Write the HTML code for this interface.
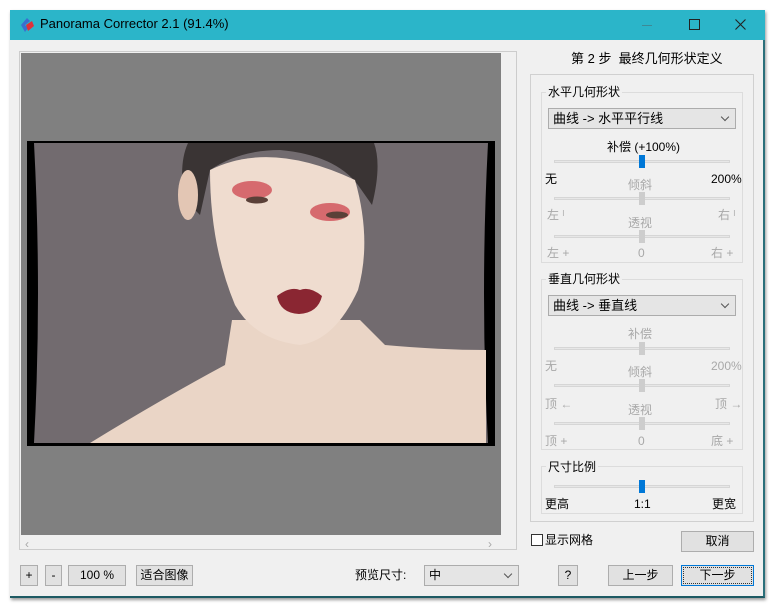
<!DOCTYPE html>
<html><head><meta charset="utf-8"><style>
*{box-sizing:border-box;margin:0;padding:0}
body{width:777px;height:608px;background:#fff;position:relative;overflow:hidden;font-family:"Liberation Sans","Noto Sans CJK SC",sans-serif;font-size:12px;color:#000}
.a{position:absolute}
.btn{position:absolute;background:#e1e1e1;border:1px solid #adadad;text-align:center;line-height:18px;font-size:12px}
.gb{position:absolute;border:1px solid #dcdcdc}
.gt{position:absolute;background:#f0f0f0;padding:0 2px;font-size:12px;line-height:14px}
.dd{position:absolute;background:#e5e5e5;border:1px solid #acacac;height:21px;line-height:19px;padding-left:4px;font-size:13px}
.dd:after{content:"";position:absolute;right:7px;top:5px;width:5px;height:5px;border-right:1px solid #555;border-bottom:1px solid #555;transform:rotate(45deg)}
.tr{position:absolute;height:3px;background:#e7e7e7;border:1px solid #d6d6d6}
.th{position:absolute;width:6px;height:13px;background:#cdcdcd}
.th.b{background:#0078d7}
.g{color:#a8a8a8}
.t{position:absolute;font-size:12px;line-height:14px;white-space:nowrap}
</style></head><body>
<div class="a" style="left:10px;top:10px;width:755px;height:588px;background:#f0f0f0;border-right:2px solid #2a6f7a;border-bottom:2px solid #1e5a63;box-shadow:1px 2px 3px rgba(0,0,0,.4)"></div>
<div class="a" style="left:10px;top:10px;width:755px;height:30px;background:#2bb5c9"></div>
<svg class="a" style="left:18px;top:16px" width="18" height="18" viewBox="0 0 18 18"><path d="M3 9 L9 2 L12 5 L7 9 L10 12 L7 16 Z" fill="#3a6fd0"/><path d="M8 9 L14 5 L16 10 L10 15 Z" fill="#e0313a"/></svg>
<div class="t" style="left:40px;top:17px;font-size:13px">Panorama Corrector 2.1 (91.4%)</div>
<div class="a" style="left:642px;top:25px;width:10px;height:1px;background:#3d8a96"></div>
<div class="a" style="left:689px;top:19px;width:11px;height:11px;border:1px solid #222"></div>
<svg class="a" style="left:735px;top:19px" width="11" height="11"><path d="M0.5 0.5 L10.5 10.5 M10.5 0.5 L0.5 10.5" stroke="#222" stroke-width="1.1"/></svg>

<div class="a" style="left:19px;top:51px;width:498px;height:499px;border:1px solid #ccc;background:#f0f0f0"></div>
<div class="a" style="left:21px;top:53px;width:480px;height:482px;background:#808080"></div>
<svg class="a" style="left:0;top:0" width="777" height="608">
<rect x="27" y="141" width="468" height="305" fill="#000"/>
<path d="M34 143 Q42 294 34 443 L488 443 Q480 294 488 143 Z" fill="#726b6f"/>
<path d="M90 443 Q160 400 225 365 L232 320 L360 320 L385 345 Q440 350 486 350 L486 443 Z" fill="#ead5c6"/>
<path d="M188 143 Q178 165 185 200 L200 215 L210 170 Q240 150 280 150 Q335 155 358 185 L372 205 Q382 165 374 143 Z" fill="#3a3434"/>
<ellipse cx="188" cy="195" rx="10" ry="25" fill="#e3c6b4"/>
<path d="M210 170 Q270 140 355 180 Q372 240 358 290 Q335 340 300 345 Q255 340 235 305 Q210 245 210 170 Z" fill="#efdccf"/>
<ellipse cx="252" cy="190" rx="20" ry="9" fill="#d66a6e"/>
<ellipse cx="330" cy="212" rx="20" ry="9" fill="#d66a6e"/>
<ellipse cx="257" cy="200" rx="11" ry="3.5" fill="#5a4038"/>
<ellipse cx="337" cy="215" rx="11" ry="3.5" fill="#5a4038"/>
<path d="M277 296 Q290 286 300 290 Q310 286 322 296 Q318 313 299 314 Q280 313 277 296 Z" fill="#8a2632"/>
</svg>
<div class="a" style="left:501px;top:53px;width:15px;height:482px;background:#f0f0f0"></div>
<div class="t g" style="left:25px;top:537px">‹</div>
<div class="t g" style="left:488px;top:537px">›</div>

<div class="t" style="left:571px;top:52px;font-size:13px">第 2 步&nbsp; 最终几何形状定义</div>
<div class="a" style="left:530px;top:74px;width:224px;height:448px;border:1px solid #d0d0d0"></div>

<div class="gb" style="left:541px;top:92px;width:202px;height:171px"></div>
<div class="gt" style="left:546px;top:85px">水平几何形状</div>
<div class="dd" style="left:548px;top:108px;width:188px">曲线 -&gt; 水平平行线</div>
<div class="t" style="left:607px;top:140px">补偿 (+100%)</div>
<div class="tr" style="left:554px;top:160px;width:176px"></div><div class="th b" style="left:639px;top:155px"></div>
<div class="t" style="left:545px;top:172px">无</div><div class="t" style="left:711px;top:172px">200%</div>
<div class="t g" style="left:628px;top:178px">倾斜</div>
<div class="tr" style="left:554px;top:197px;width:176px"></div><div class="th" style="left:639px;top:192px"></div>
<div class="t g" style="left:547px;top:208px">左 ˡ</div><div class="t g" style="left:718px;top:208px">右 ˡ</div>
<div class="t g" style="left:628px;top:216px">透视</div>
<div class="tr" style="left:554px;top:235px;width:176px"></div><div class="th" style="left:639px;top:230px"></div>
<div class="t g" style="left:547px;top:246px">左 +</div><div class="t g" style="left:638px;top:246px">0</div><div class="t g" style="left:711px;top:246px">右 +</div>

<div class="gb" style="left:541px;top:279px;width:202px;height:171px"></div>
<div class="gt" style="left:546px;top:272px">垂直几何形状</div>
<div class="dd" style="left:548px;top:295px;width:188px">曲线 -&gt; 垂直线</div>
<div class="t g" style="left:628px;top:327px">补偿</div>
<div class="tr" style="left:554px;top:347px;width:176px"></div><div class="th" style="left:639px;top:342px"></div>
<div class="t g" style="left:545px;top:359px">无</div><div class="t g" style="left:711px;top:359px">200%</div>
<div class="t g" style="left:628px;top:365px">倾斜</div>
<div class="tr" style="left:554px;top:384px;width:176px"></div><div class="th" style="left:639px;top:379px"></div>
<div class="t g" style="left:545px;top:397px">顶 ←</div><div class="t g" style="left:715px;top:397px">顶 →</div>
<div class="t g" style="left:628px;top:403px">透视</div>
<div class="tr" style="left:554px;top:422px;width:176px"></div><div class="th" style="left:639px;top:417px"></div>
<div class="t g" style="left:545px;top:434px">顶 +</div><div class="t g" style="left:638px;top:434px">0</div><div class="t g" style="left:711px;top:434px">底 +</div>

<div class="gb" style="left:541px;top:466px;width:202px;height:48px"></div>
<div class="gt" style="left:546px;top:460px">尺寸比例</div>
<div class="tr" style="left:554px;top:485px;width:176px"></div><div class="th b" style="left:639px;top:480px"></div>
<div class="t" style="left:545px;top:497px">更高</div><div class="t" style="left:634px;top:497px">1:1</div><div class="t" style="left:712px;top:497px">更宽</div>

<div class="a" style="left:531px;top:534px;width:12px;height:12px;border:1px solid #333;background:#fff"></div>
<div class="t" style="left:545px;top:533px">显示网格</div>
<div class="btn" style="left:681px;top:531px;width:73px;height:21px">取消</div>

<div class="btn" style="left:20px;top:565px;width:18px;height:21px">+</div>
<div class="btn" style="left:45px;top:565px;width:17px;height:21px">-</div>
<div class="btn" style="left:68px;top:565px;width:58px;height:21px">100 %</div>
<div class="btn" style="left:136px;top:565px;width:57px;height:21px">适合图像</div>
<div class="t" style="left:355px;top:568px">预览尺寸:</div>
<div class="dd" style="left:424px;top:565px;width:95px;font-size:12px">中</div>
<div class="btn" style="left:558px;top:565px;width:20px;height:21px">?</div>
<div class="btn" style="left:608px;top:565px;width:65px;height:21px">上一步</div>
<div class="btn" style="left:681px;top:565px;width:73px;height:21px;border:1px solid #0078d7;outline:1px dotted #333;outline-offset:-3px">下一步</div>
</body></html>
